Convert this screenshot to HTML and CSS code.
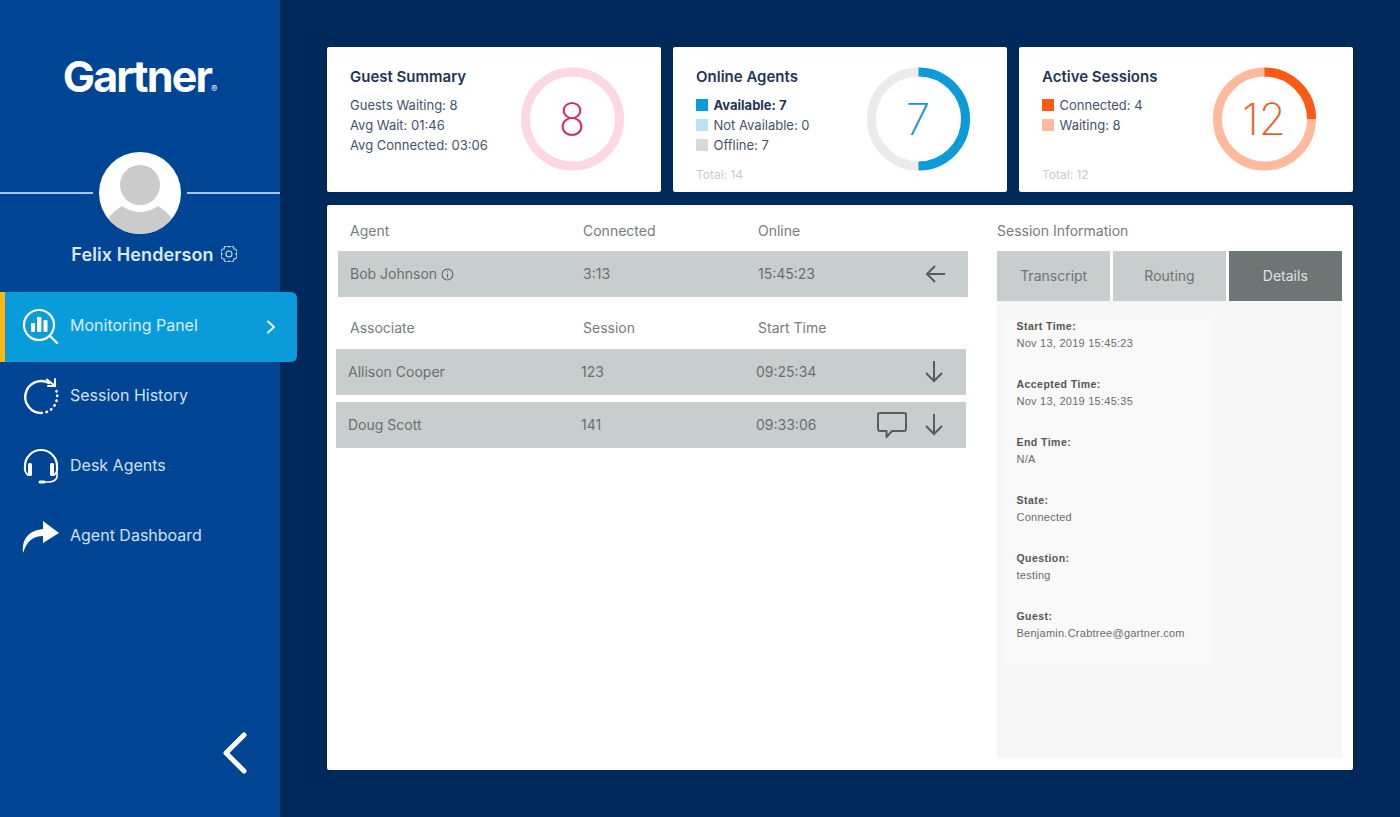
FILE: index.html
```html
<!DOCTYPE html>
<html lang="en">
<head>
<meta charset="utf-8">
<title>Gartner Monitoring Panel</title>
<link rel="stylesheet" href="styles.css">
</head>
<body>
<div class="app">
  <aside class="sidebar">
    <div class="logo">Gartner<span class="reg">®</span></div>
    <div class="avatar-row">
      <span class="rule"></span>
      <svg class="avatar" viewBox="0 0 82 82"><defs><clipPath id="av"><circle cx="41" cy="41" r="41"/></clipPath></defs><circle cx="41" cy="41" r="41" fill="#fff"/><g clip-path="url(#av)" fill="#cbcbcb"><circle cx="41" cy="33" r="20"/><path d="M0 82 L11 64 Q16 58 23 54 Q41 66 59 54 Q66 58 71 64 L82 82 Z"/></g></svg>
      <span class="rule"></span>
    </div>
    <div class="user">
      <span>Felix Henderson</span>
      <svg class="gear" viewBox="0 0 16 16" fill="none" stroke="#cfe0f2" stroke-width="1.1"><path d="M15 8A2.8 2.8 0 0 1 12.95 12.95A2.8 2.8 0 0 1 8 15A2.8 2.8 0 0 1 3.05 12.95A2.8 2.8 0 0 1 1 8A2.8 2.8 0 0 1 3.05 3.05A2.8 2.8 0 0 1 8 1A2.8 2.8 0 0 1 12.95 3.05A2.8 2.8 0 0 1 15 8Z"/><circle cx="8" cy="8" r="3"/></svg>
    </div>
    <nav class="nav">
      <a class="nav-item active">
        <svg class="nav-icon" viewBox="0 0 38 38" fill="none" stroke="#fff"><circle cx="17" cy="17" r="15" stroke-width="2.2"/><path d="M28 28 L35 35" stroke-width="2.4" stroke-linecap="round"/><g fill="#fff" stroke="none"><rect x="9" y="15" width="4" height="9" rx="1"/><rect x="15" y="9" width="4.4" height="15" rx="1"/><rect x="21.5" y="12" width="4" height="12" rx="1"/></g></svg>
        <span class="nav-label">Monitoring Panel</span>
        <svg class="nav-chev" viewBox="0 0 10 14" fill="none" stroke="#e6f5fd" stroke-width="2" stroke-linecap="round" stroke-linejoin="round"><path d="M2 1.5 L8 7 L2 12.5"/></svg>
      </a>
      <a class="nav-item">
        <svg class="nav-icon" viewBox="0 0 38 38" fill="none" stroke="#fff" stroke-width="2.4" stroke-linecap="round"><path d="M27 5 A16 16 0 1 0 20 35"/><path d="M24.5 34 L25 33.8 M29 31.5 L29.4 31.1 M32.4 27.6 L32.7 27.1 M34.5 23 L34.6 22.5 M35.2 18 V17.5 M34.6 13.5 L34.5 13" stroke-width="2.6"/><path d="M25 1.5 L33 8 M33 1 V8 H26" stroke-width="2"/></svg>
        <span class="nav-label">Session History</span>
      </a>
      <a class="nav-item">
        <svg class="nav-icon" viewBox="0 0 38 38" fill="none" stroke="#fff" stroke-width="2.2" stroke-linecap="round"><path d="M3 22 V18 A16 16 0 0 1 35 18 V22"/><rect x="6" y="15" width="4" height="13" rx="1.5" fill="#fff" stroke="none"/><rect x="28" y="15" width="4" height="13" rx="1.5" fill="#fff" stroke="none"/><path d="M3 18 Q2 24 6 27 M35 18 Q36 24 32 27" stroke-width="1.8"/><path d="M35 24 V29 Q34 33 28 34 H20" stroke-width="1.6"/><path d="M18 34 H22" stroke-width="3"/></svg>
        <span class="nav-label">Desk Agents</span>
      </a>
      <a class="nav-item">
        <svg class="nav-icon" viewBox="0 0 38 38" fill="#fff"><path d="M1 35 C0 22 5 13 21 11 V3 L37 15 L21 25 V18 C11 18 5 23 1 35 Z"/></svg>
        <span class="nav-label">Agent Dashboard</span>
      </a>
    </nav>
    <div class="collapse">
      <svg class="collapse-icon" viewBox="0 0 24 42" fill="none" stroke="#fff" stroke-width="5" stroke-linecap="round" stroke-linejoin="round"><path d="M21 3 L3 21 L21 39"/></svg>
    </div>
  </aside>

  <main class="content">
    <section class="cards">
      <article class="card">
        <div class="card-text">
          <h2 class="card-title">Guest Summary</h2>
          <p class="stat">Guests Waiting: 8</p>
          <p class="stat">Avg Wait: 01:46</p>
          <p class="stat">Avg Connected: 03:06</p>
        </div>
        <div class="donut">
          <svg class="donut-svg" viewBox="0 0 104 104" fill="none"><circle cx="52" cy="52" r="47.5" stroke="#fcd8e3" stroke-width="9"/></svg>
          <span class="donut-num num-pink">8</span>
        </div>
      </article>
      <article class="card">
        <div class="card-text">
          <h2 class="card-title">Online Agents</h2>
          <p class="stat"><span class="swatch sw-blue"></span><b>Available: 7</b></p>
          <p class="stat"><span class="swatch sw-lblue"></span>Not Available: 0</p>
          <p class="stat"><span class="swatch sw-grey"></span>Offline: 7</p>
          <p class="total">Total: 14</p>
        </div>
        <div class="donut">
          <svg class="donut-svg" viewBox="0 0 104 104" fill="none"><circle cx="52" cy="52" r="47.5" stroke="#ebebeb" stroke-width="9"/><circle cx="52" cy="52" r="47.5" stroke="#0a9bd8" stroke-width="9" pathLength="100" stroke-dasharray="50 50" transform="rotate(-90 52 52)"/></svg>
          <span class="donut-num num-blue">7</span>
        </div>
      </article>
      <article class="card">
        <div class="card-text">
          <h2 class="card-title">Active Sessions</h2>
          <p class="stat"><span class="swatch sw-orange"></span>Connected: 4</p>
          <p class="stat"><span class="swatch sw-lorange"></span>Waiting: 8</p>
          <p class="total total-low">Total: 12</p>
        </div>
        <div class="donut">
          <svg class="donut-svg" viewBox="0 0 104 104" fill="none"><circle cx="52" cy="52" r="47.5" stroke="#fdba9c" stroke-width="9"/><circle cx="52" cy="52" r="47.5" stroke="#fb5a14" stroke-width="9" pathLength="100" stroke-dasharray="25 75" transform="rotate(-90 52 52)"/></svg>
          <span class="donut-num num-orange">12</span>
        </div>
      </article>
    </section>

    <section class="panel">
      <div class="tables">
        <div class="grid-row head shift">
          <span>Agent</span><span>Connected</span><span>Online</span>
        </div>
        <div class="grid-row row shift">
          <span class="with-info">Bob Johnson
            <svg class="info" viewBox="0 0 12 12" fill="none" stroke="#666" stroke-width="1"><circle cx="6" cy="6" r="5"/><path d="M6 5.2 V9 M6 3 V4"/></svg>
          </span>
          <span>3:13</span><span>15:45:23</span>
          <span class="actions">
            <svg class="arrow-left" viewBox="0 0 20 18" fill="none" stroke="#555d5d" stroke-width="2"><path d="M20 9 H2 M10 1 L2 9 L10 17"/></svg>
          </span>
        </div>
        <div class="grid-row head shift head-second">
          <span>Associate</span><span>Session</span><span>Start Time</span>
        </div>
        <div class="grid-row row">
          <span>Allison Cooper</span><span>123</span><span>09:25:34</span>
          <span class="actions">
            <svg class="arrow-down" viewBox="0 0 18 22" fill="none" stroke="#555d5d" stroke-width="2"><path d="M9 0 V20 M1 12 L9 20 L17 12"/></svg>
          </span>
        </div>
        <div class="grid-row row row-next">
          <span>Doug Scott</span><span>141</span><span>09:33:06</span>
          <span class="actions">
            <svg class="chat" viewBox="0 0 30 26" fill="none" stroke="#555d5d" stroke-width="2" stroke-linejoin="round"><path d="M3 1 H27 Q29 1 29 3 V17 Q29 19 27 19 H15 L9.5 25 V19 H3 Q1 19 1 17 V3 Q1 1 3 1 Z"/></svg>
            <svg class="arrow-down" viewBox="0 0 18 22" fill="none" stroke="#555d5d" stroke-width="2"><path d="M9 0 V20 M1 12 L9 20 L17 12"/></svg>
          </span>
        </div>
      </div>

      <div class="session">
        <div class="session-head">Session Information</div>
        <div class="tabs">
          <span class="tab">Transcript</span>
          <span class="tab">Routing</span>
          <span class="tab tab-on">Details</span>
        </div>
        <div class="details">
          <dl class="detail-list">
            <dt>Start Time:</dt><dd>Nov 13, 2019 15:45:23</dd>
            <dt>Accepted Time:</dt><dd>Nov 13, 2019 15:45:35</dd>
            <dt>End Time:</dt><dd>N/A</dd>
            <dt>State:</dt><dd>Connected</dd>
            <dt>Question:</dt><dd>testing</dd>
            <dt>Guest:</dt><dd>Benjamin.Crabtree@gartner.com</dd>
          </dl>
        </div>
      </div>
    </section>
  </main>
</div>
</body>
</html>
```

FILE: styles.css
```css
* { box-sizing: border-box; }
html, body { margin: 0; padding: 0; }
body {
  width: 1400px;
  height: 817px;
  overflow: hidden;
  background: #00295b;
  font-family: Inter, "Liberation Sans", sans-serif;
}
.app { display: flex; height: 817px; }

/* Sidebar */
.sidebar {
  width: 280px;
  flex: none;
  background: #004494;
  display: flex;
  flex-direction: column;
  padding-top: 46px;
  color: #fff;
}
.logo {
  height: 60px;
  margin-bottom: 46px;
  display: flex;
  align-items: center;
  justify-content: center;
  font-size: 43px;
  font-weight: 700;
  letter-spacing: -1.8px;
  color: #fff;
}
.reg { font-size: 9px; letter-spacing: 0; align-self: flex-end; margin-bottom: 12px; font-weight: 400; }
.avatar-row { display: flex; align-items: center; gap: 6px; height: 82px; }
.rule { flex: 1; height: 1.5px; background: #a9c6e8; }
.avatar { width: 82px; height: 82px; flex: none; display: block; }
.user {
  height: 40px;
  margin-bottom: 18px;
  display: flex;
  align-items: center;
  justify-content: center;
  gap: 7px;
  padding-left: 28px;
  font-size: 18px;
  font-weight: 600;
  letter-spacing: 0.1px;
  color: #dbe8f6;
}
.gear { width: 16px; height: 16px; }
.nav { display: flex; flex-direction: column; }
.nav-item {
  width: 280px;
  height: 70px;
  display: flex;
  align-items: center;
  padding-left: 22px;
  gap: 10px;
  font-size: 16px;
  color: #cfe0f2;
}
.nav-item.active {
  width: 297px;
  background: #0a9bdb;
  border-left: 5px solid #fbb80f;
  padding-left: 17px;
  border-radius: 0 6px 6px 0;
  color: #d7f0fc;
}
.nav-icon { width: 38px; height: 38px; flex: none; }
.nav-label { flex: 1; margin-bottom: 5px; }
.nav-chev { width: 10px; height: 14px; margin-right: 21px; }
.collapse { margin-top: auto; padding: 0 33px 43px 0; display: flex; justify-content: flex-end; }
.collapse-icon { width: 24px; height: 42px; }

/* Content */
.content { flex: 1; padding: 47px; display: flex; flex-direction: column; gap: 13px; min-width: 0; }
.cards { display: grid; grid-template-columns: repeat(3, 334px); column-gap: 12px; height: 145px; }
.card {
  background: #fff;
  border-radius: 2px;
  display: flex;
  justify-content: space-between;
  padding: 20px 37.5px 0 23px;
}
.card-text { display: flex; flex-direction: column; height: 125px; padding-top: 1px; }
.card-title { margin: 0 0 9px; font-size: 15px; line-height: 18px; font-weight: 600; color: #1f3556; }
.stat {
  margin: 0;
  height: 20px;
  display: flex;
  align-items: center;
  font-size: 13px;
  color: #46536b;
}
.stat b { font-weight: 700; color: #1f3556; }
.swatch { width: 12px; height: 12px; margin-right: 5.5px; flex: none; }
.sw-blue { background: #0a9bd8; }
.sw-lblue { background: #b9e2f5; }
.sw-grey { background: #d9d9d9; }
.sw-orange { background: #fb5a14; }
.sw-lorange { background: #fdba9c; }
.total { margin: 10px 0 0; font-size: 12px; line-height: 20px; color: #c8cbcf; }
.total-low { margin-top: 30px; }
.donut { width: 103px; height: 104px; display: grid; place-items: center; flex: none; }
.donut-svg, .donut-num { grid-area: 1 / 1; }
.donut-svg { width: 103px; height: 104px; display: block; }
.donut-num { font-size: 44px; font-weight: 200; line-height: 1; }
.num-pink { color: #cf2a60; }
.num-blue { color: #1a94cf; }
.num-orange { color: #e4622a; }

/* Panel */
.panel {
  flex: 1;
  min-height: 0;
  background: #fff;
  border-radius: 2px;
  display: flex;
  gap: 29px;
  padding: 10px 11px 12px 9px;
}
.tables { width: 632px; flex: none; }
.grid-row {
  display: grid;
  grid-template-columns: 233px 175px 1fr auto;
  align-items: center;
  font-size: 14px;
}
.head { height: 32px; color: #777c7c; margin-bottom: 4px; padding-bottom: 2px; }
.row {
  height: 46px;
  width: 630px;
  padding-left: 12px;
  padding-bottom: 2px;
  background: #c8cdcd;
  color: #6a7070;
}
.shift { margin-left: 2px; }
.head.shift { padding-left: 12px; width: 630px; }
.head-second { margin-top: 15px; margin-bottom: 5px; }
.row-next { margin-top: 7px; }
.with-info { display: flex; align-items: center; gap: 4px; }
.info { width: 13px; height: 13px; margin-top: 2px; }
.actions { display: flex; align-items: center; gap: 18px; padding-right: 23px; margin-bottom: -2px; }
.arrow-left { width: 20px; height: 18px; display: block; }
.arrow-down { width: 18px; height: 22px; display: block; }
.chat { width: 30px; height: 26px; display: block; }

.session { flex: 1; display: flex; flex-direction: column; min-width: 0; }
.session-head { height: 32px; margin-bottom: 4px; padding-bottom: 2px; display: flex; align-items: center; font-size: 14px; color: #777c7c; }
.tabs { display: grid; grid-template-columns: repeat(3, 1fr); column-gap: 2.5px; height: 50px; }
.tab { display: flex; align-items: center; justify-content: center; padding-bottom: 1px; background: #c8cdcd; color: #6f7575; font-size: 14px; }
.tab-on { background: #6d7575; color: #dfe3e3; }
.details { flex: 1; background: #f7f7f7; padding: 17px 0 0 8px; }
.detail-list {
  margin: 0;
  width: 207px;
  height: 346px;
  padding-left: 11.5px;
  background: #f9f9f9;
  font-family: "Liberation Sans", Arial, sans-serif;
  font-size: 11px;
  line-height: 17px;
}
.detail-list dt { font-weight: 700; color: #555; font-size: 10.5px; letter-spacing: 0.45px; line-height: 17px; }
.detail-list dd { margin: 0 0 24px; color: #6b6b6b; letter-spacing: 0.25px; }
```
